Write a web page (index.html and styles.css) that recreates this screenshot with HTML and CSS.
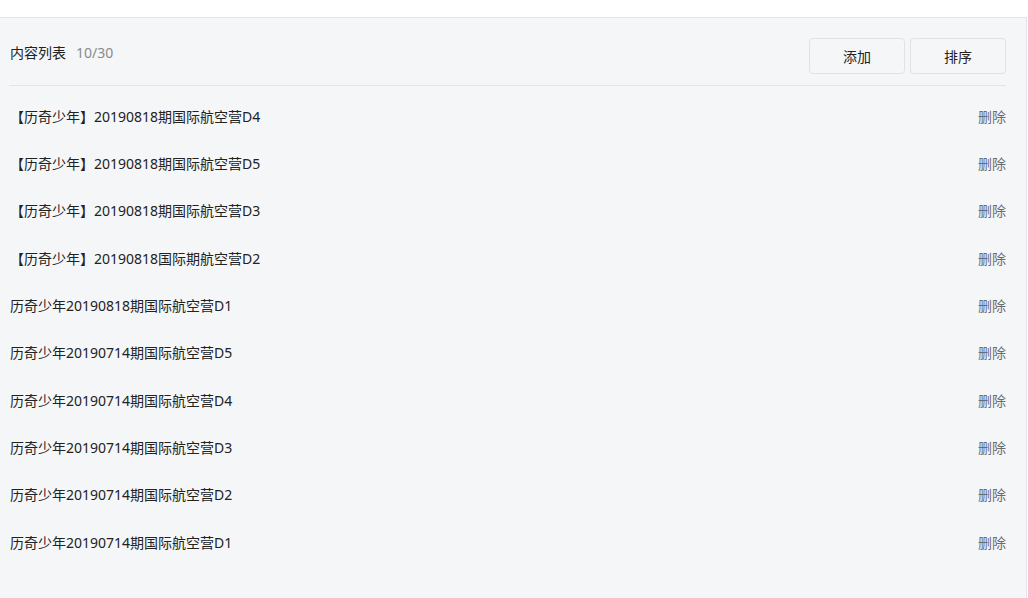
FILE: index.html
```html
<!DOCTYPE html>
<html lang="zh">
<head>
<meta charset="utf-8">
<title>内容列表</title>
<link rel="stylesheet" href="styles.css">
</head>
<body>
<div class="topbar"></div>
<div class="panel">
  <div class="header">
    <div class="title">内容列表<span class="count">10/30</span></div>
    <div class="actions">
      <button class="btn">添加</button>
      <button class="btn">排序</button>
    </div>
  </div>
  <ul class="list">
    <li class="row"><span class="name">【历奇少年】20190818期国际航空营D4</span><a class="del">删除</a></li>
    <li class="row"><span class="name">【历奇少年】20190818期国际航空营D5</span><a class="del">删除</a></li>
    <li class="row"><span class="name">【历奇少年】20190818期国际航空营D3</span><a class="del">删除</a></li>
    <li class="row"><span class="name">【历奇少年】20190818国际期航空营D2</span><a class="del">删除</a></li>
    <li class="row"><span class="name">历奇少年20190818期国际航空营D1</span><a class="del">删除</a></li>
    <li class="row"><span class="name">历奇少年20190714期国际航空营D5</span><a class="del">删除</a></li>
    <li class="row"><span class="name">历奇少年20190714期国际航空营D4</span><a class="del">删除</a></li>
    <li class="row"><span class="name">历奇少年20190714期国际航空营D3</span><a class="del">删除</a></li>
    <li class="row"><span class="name">历奇少年20190714期国际航空营D2</span><a class="del">删除</a></li>
    <li class="row"><span class="name">历奇少年20190714期国际航空营D1</span><a class="del">删除</a></li>
  </ul>
</div>
</body>
</html>
```
FILE: styles.css
```css
html, body {
  margin: 0;
  padding: 0;
  background: #ffffff;
  font-family: "Noto Sans", "Noto Sans CJK SC", sans-serif;
  font-size: 14px;
  color: #1f1f1f;
}
.topbar {
  height: 17px;
  background: #ffffff;
}
.panel {
  width: 997px;
  min-height: 600px;
  background: #f5f6f8;
  border-top: 1px solid #e2e4e8;
  border-right: 1px solid #e2e4e8;
  padding: 0 20px 0 9px;
}
.header {
  display: flex;
  justify-content: space-between;
  align-items: flex-start;
  padding: 20px 0 11px;
  border-bottom: 1px solid #e2e4e8;
}
.title {
  line-height: 30px;
  padding-left: 1px;
  color: #222;
}
.count {
  margin-left: 10px;
  color: #8a8a8a;
}
.actions {
  display: flex;
  gap: 5px;
}
.btn {
  width: 96px;
  height: 36px;
  border: 1px solid #e0e2e6;
  border-radius: 4px;
  background: #f5f6f8;
  font-family: inherit;
  font-size: 14px;
  color: #222;
  padding: 0;
}
.list {
  list-style: none;
  margin: 0;
  padding: 6px 0 0;
}
.row {
  display: flex;
  justify-content: space-between;
  align-items: center;
  height: 47.33px;
  padding-left: 1px;
}
.name {
  color: #222;
}
.del {
  color: #686a74;
  cursor: pointer;
}
```
